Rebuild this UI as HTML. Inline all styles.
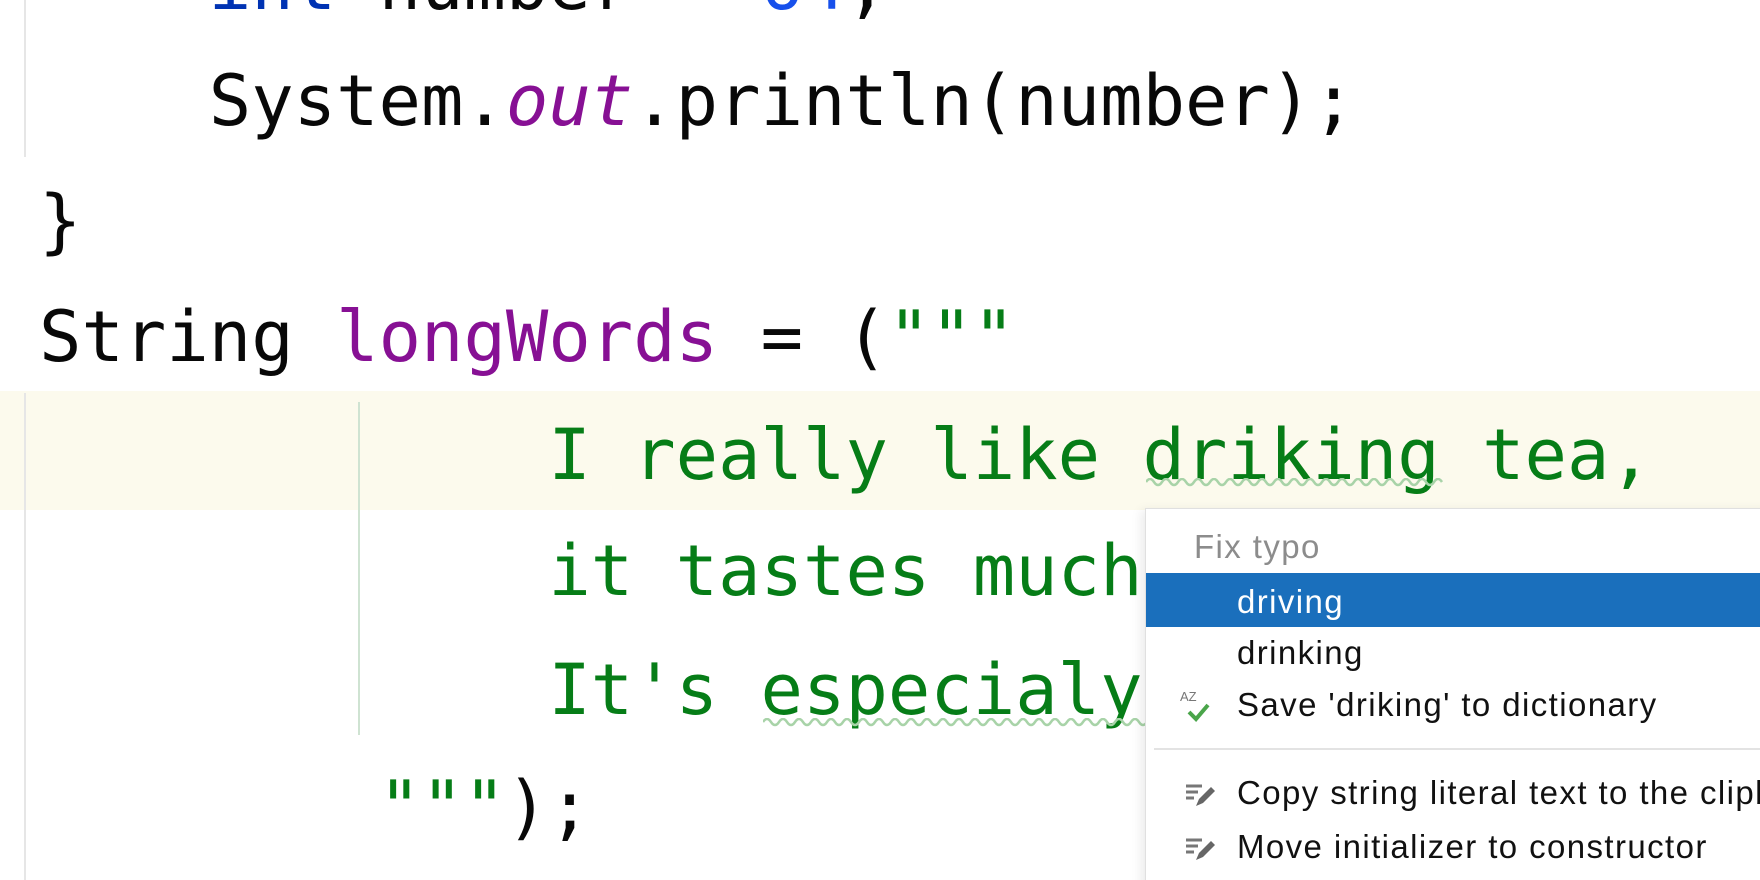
<!DOCTYPE html>
<html><head><meta charset="utf-8"><style>
html,body{margin:0;padding:0;width:1760px;height:880px;overflow:hidden;background:#fff;position:relative}
.code{position:absolute;left:39px;font-family:"DejaVu Sans Mono","Liberation Mono",monospace;font-size:70.5px;white-space:pre;line-height:1;color:#080808}
.kw{color:#0033b3}.num{color:#1750eb}.pu{color:#871094}.st{color:#067d17}
.menu{position:absolute;font-family:"Liberation Sans",sans-serif;font-size:33px;letter-spacing:1.4px;white-space:nowrap;line-height:1}
</style></head><body>
<div style="position:absolute;left:0;top:391px;width:1760px;height:119px;background:#fcfaed"></div>
<div style="position:absolute;left:24px;top:0;width:2px;height:157px;background:#e6e6e6"></div>
<div style="position:absolute;left:24px;top:393px;width:2px;height:487px;background:#e6e6e6"></div>
<div style="position:absolute;left:358px;top:402px;width:2px;height:333px;background:#cfe3d2"></div>

<div class="code" style="top:-50px">    <span class="kw">int</span> number = <span class="num">64</span>;</div>
<div class="code" style="top:66px">    System.<span class="pu" style="font-style:italic">out</span>.println(number);</div>
<div class="code" style="top:186px">}</div>
<div class="code" style="top:302px">String <span class="pu">longWords</span> = (<span class="st">"""</span></div>
<div class="code st" style="top:420px">            I really like driking tea,</div>
<div class="code st" style="top:536px">            it tastes much</div>
<div class="code st" style="top:655px">            It's especialy</div>
<div class="code st" style="top:772px">        """<span style="color:#080808">);</span></div>

<svg style="position:absolute;left:1146px;top:478px" width="298" height="12"><path d="M0 4 q4 -6 8 0 t8 0 t8 0 t8 0 t8 0 t8 0 t8 0 t8 0 t8 0 t8 0 t8 0 t8 0 t8 0 t8 0 t8 0 t8 0 t8 0 t8 0 t8 0 t8 0 t8 0 t8 0 t8 0 t8 0 t8 0 t8 0 t8 0 t8 0 t8 0 t8 0 t8 0 t8 0 t8 0 t8 0 t8 0 t8 0 t8 0" fill="none" stroke="#a8d3a8" stroke-width="2.5"/></svg>
<svg style="position:absolute;left:763px;top:718px" width="385" height="12"><path d="M0 4 q4 -6 8 0 t8 0 t8 0 t8 0 t8 0 t8 0 t8 0 t8 0 t8 0 t8 0 t8 0 t8 0 t8 0 t8 0 t8 0 t8 0 t8 0 t8 0 t8 0 t8 0 t8 0 t8 0 t8 0 t8 0 t8 0 t8 0 t8 0 t8 0 t8 0 t8 0 t8 0 t8 0 t8 0 t8 0 t8 0 t8 0 t8 0 t8 0 t8 0 t8 0 t8 0 t8 0 t8 0 t8 0 t8 0 t8 0 t8 0 t8 0" fill="none" stroke="#a8d3a8" stroke-width="2.5"/></svg>

<div style="position:absolute;left:1145px;top:508px;width:640px;height:400px;background:#fff;border:1px solid #e0e0e0;box-shadow:-4px 2px 10px rgba(0,0,0,0.08)"></div>
<div class="menu" style="left:1194px;top:530px;color:#8c8c8c">Fix typo</div>
<div style="position:absolute;left:1146px;top:573px;width:614px;height:54px;background:#1a6fbc"></div>
<div class="menu" style="left:1237px;top:585px;color:#fff">driving</div>
<div class="menu" style="left:1237px;top:636px;color:#111">drinking</div>
<div class="menu" style="left:1237px;top:688px;color:#111">Save 'driking' to dictionary</div>
<svg style="position:absolute;left:1180px;top:688px" width="36" height="36"><text x="0" y="13" font-family="Liberation Sans,sans-serif" font-size="13" fill="#777">AZ</text><path d="M9 24 l7 7 l12 -14" fill="none" stroke="#4aa54a" stroke-width="4"/></svg>
<div style="position:absolute;left:1154px;top:748px;width:606px;height:2px;background:#e3e3e3"></div>
<div class="menu" style="left:1237px;top:776px;color:#111">Copy string literal text to the clipboard</div>
<div class="menu" style="left:1237px;top:830px;color:#111">Move initializer to constructor</div>
<svg style="position:absolute;left:1184px;top:780px" width="34" height="30"><path d="M2 6 h16 M2 12 h12 M2 18 h8" stroke="#777" stroke-width="3"/><path d="M12 26 l3 -7 l12 -12 l4 4 l-12 12 z" fill="#666"/></svg>
<svg style="position:absolute;left:1184px;top:834px" width="34" height="30"><path d="M2 6 h16 M2 12 h12 M2 18 h8" stroke="#777" stroke-width="3"/><path d="M12 26 l3 -7 l12 -12 l4 4 l-12 12 z" fill="#666"/></svg>
</body></html>
